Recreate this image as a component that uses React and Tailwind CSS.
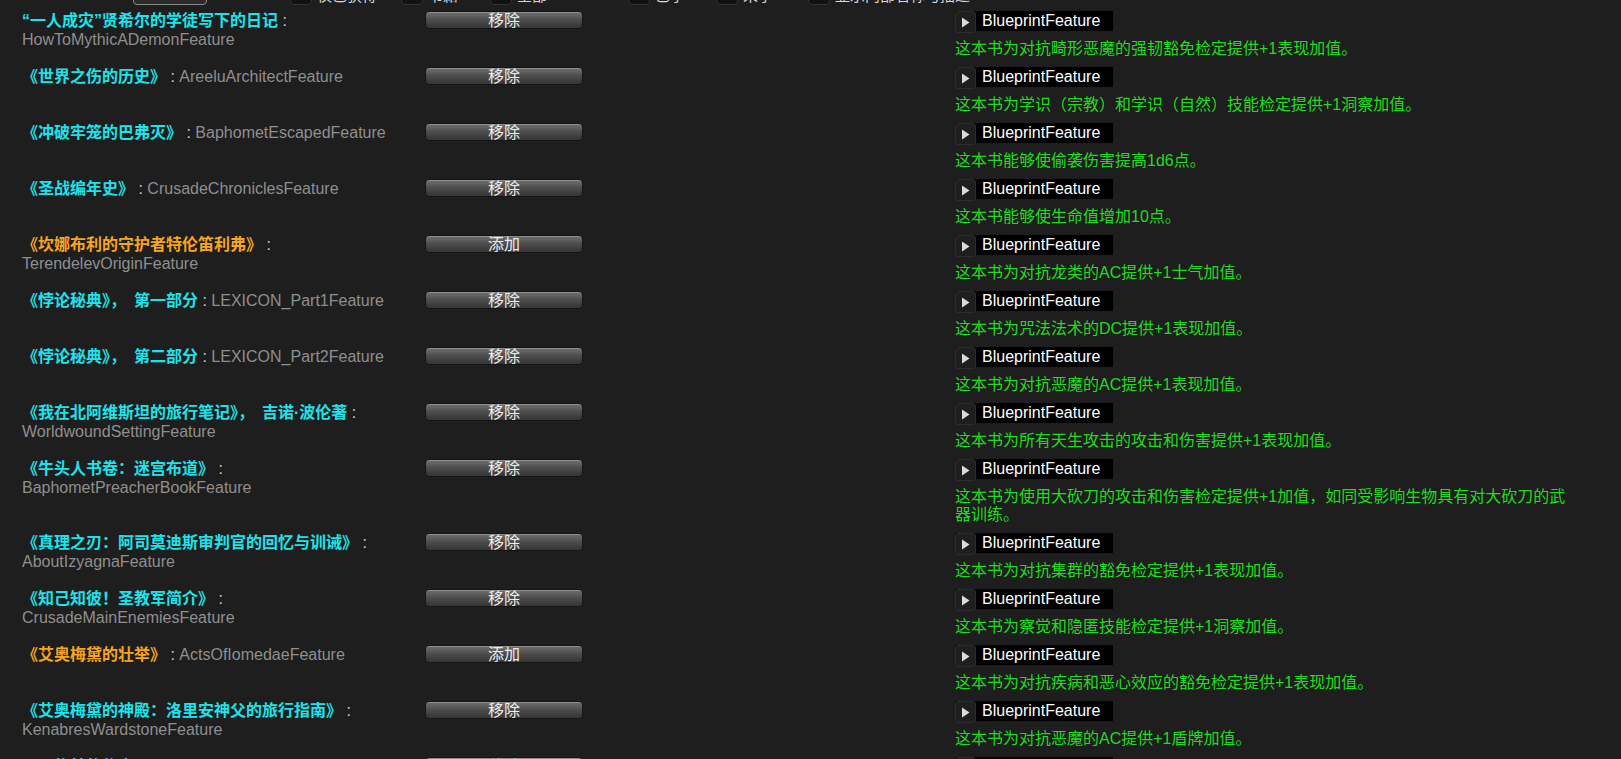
import { useState } from "react";

const books = [
  { title: "“一人成灾”贤希尔的学徒写下的日记", name: "HowToMythicADemonFeature", added: true, desc: "这本书为对抗畸形恶魔的强韧豁免检定提供+1表现加值。" },
  { title: "《世界之伤的历史》", name: "AreeluArchitectFeature", added: true, desc: "这本书为学识（宗教）和学识（自然）技能检定提供+1洞察加值。" },
  { title: "《冲破牢笼的巴弗灭》", name: "BaphometEscapedFeature", added: true, desc: "这本书能够使偷袭伤害提高1d6点。" },
  { title: "《圣战编年史》", name: "CrusadeChroniclesFeature", added: true, desc: "这本书能够使生命值增加10点。" },
  { title: "《坎娜布利的守护者特伦笛利弗》", name: "TerendelevOriginFeature", added: false, desc: "这本书为对抗龙类的AC提供+1士气加值。" },
  { title: "《悖论秘典》，\u2002第一部分", name: "LEXICON_Part1Feature", added: true, desc: "这本书为咒法法术的DC提供+1表现加值。" },
  { title: "《悖论秘典》，\u2002第二部分", name: "LEXICON_Part2Feature", added: true, desc: "这本书为对抗恶魔的AC提供+1表现加值。" },
  { title: "《我在北阿维斯坦的旅行笔记》，\u2002吉诺·波伦著", name: "WorldwoundSettingFeature", added: true, desc: "这本书为所有天生攻击的攻击和伤害提供+1表现加值。" },
  { title: "《牛头人书卷：迷宫布道》", name: "BaphometPreacherBookFeature", added: true, desc: "这本书为使用大砍刀的攻击和伤害检定提供+1加值，如同受影响生物具有对大砍刀的武器训练。" },
  { title: "《真理之刃：阿司莫迪斯审判官的回忆与训诫》", name: "AboutIzyagnaFeature", added: true, desc: "这本书为对抗集群的豁免检定提供+1表现加值。" },
  { title: "《知己知彼！圣教军简介》", name: "CrusadeMainEnemiesFeature", added: true, desc: "这本书为察觉和隐匿技能检定提供+1洞察加值。" },
  { title: "《艾奥梅黛的壮举》", name: "ActsOfIomedaeFeature", added: false, desc: "这本书为对抗疾病和恶心效应的豁免检定提供+1表现加值。" },
  { title: "《艾奥梅黛的神殿：洛里安神父的旅行指南》", name: "KenabresWardstoneFeature", added: true, desc: "这本书为对抗恶魔的AC提供+1盾牌加值。" },
  { title: "《阿扎林的秘密》", name: "SecretsOfAzlantFeature", added: true, desc: "这本书为意志豁免检定提供+1表现加值。" },
];

const filters = [
  { label: "仅已获得", w: "w-[111px]" },
  { label: "书籍", w: "w-[89px]" },
  { label: "全部", w: "w-[138px]" },
  { label: "已学", w: "w-[88px]" },
  { label: "未学", w: "w-[92px]" },
  { label: "显示内部名称与描述", w: "w-[180px]" },
];

function Toolbar() {
  // only the bottom edge of the toolbar is left in view
  return (
    <div className="h-[5px] overflow-hidden">
      <div className="-mt-[17px] flex h-[22px] items-end text-[15px] leading-[18px] text-[#d8d8d8]">
        <div className="ml-[133px] h-[20px] w-[74px] rounded-[4px] border border-[#8a8a8a] bg-[#2a2a2a]" />
        <div className="ml-[83px] flex">
          {filters.map(f => (
            <div key={f.label} className={`flex items-end ${f.w}`}>
              <div className="h-[21px] w-[22px] shrink-0 rounded-[4px] border border-[#333] bg-[#111]" />
              <span className="ml-[5px] whitespace-nowrap">{f.label}</span>
            </div>
          ))}
        </div>
      </div>
    </div>
  );
}

function BookRow({ book, onToggle }) {
  const titleColor = book.added ? "text-[#1ee3ea]" : "text-[#f7a51f]";
  return (
    <div className="flex items-start">
      <div className="w-[393px] text-[16px] leading-[19px]">
        <span className={`font-bold ${titleColor}`}>{book.title}</span>
        <span className="text-[#d0d0d0]"> : </span>
        <span className="text-[#8f8f8f]">{book.name}</span>
      </div>

      <button
        onClick={onToggle}
        className="ml-[10px] h-[18px] w-[158px] rounded-[4px] border border-[#151515] bg-gradient-to-b from-[#707070] via-[#4c4c4c] to-[#353535] text-[16px] leading-[15px] text-[#ececec] shadow-[inset_0_1px_0_#8e8e8e]"
      >
        {book.added ? "移除" : "添加"}
      </button>

      <div className="ml-[372px] w-[616px] pb-[9px]">
        <div className="flex h-[20px] w-[158px] bg-black">
          <div className="flex h-[22px] w-[21px] items-center justify-center rounded-[3px] border border-[#2c2c2c] bg-[#1f1f1f]">
            <svg width="9" height="11" viewBox="0 0 9 11">
              <path d="M1 0.5 L8.5 5.5 L1 10.5 Z" fill="#dcdcdc" />
            </svg>
          </div>
          <span className="pl-[6px] text-[16px] leading-[20px] text-white">BlueprintFeature</span>
        </div>
        <div className="mt-[9px] text-[16px] leading-[18px] text-[#20dc20]">{book.desc}</div>
      </div>
    </div>
  );
}

export default function App() {
  const [list, setList] = useState(books);

  function toggle(i) {
    setList(prev => prev.map((b, j) => (j === i ? { ...b, added: !b.added } : b)));
  }

  return (
    <div className="h-screen overflow-hidden bg-[#1e1e1e] font-['Liberation_Sans','Noto_Sans_CJK_SC',sans-serif]">
      <Toolbar />
      <div className="mt-[6px] flex flex-col pl-[22px]">
        {list.map((book, i) => (
          <BookRow key={book.name} book={book} onToggle={() => toggle(i)} />
        ))}
      </div>
    </div>
  );
}
